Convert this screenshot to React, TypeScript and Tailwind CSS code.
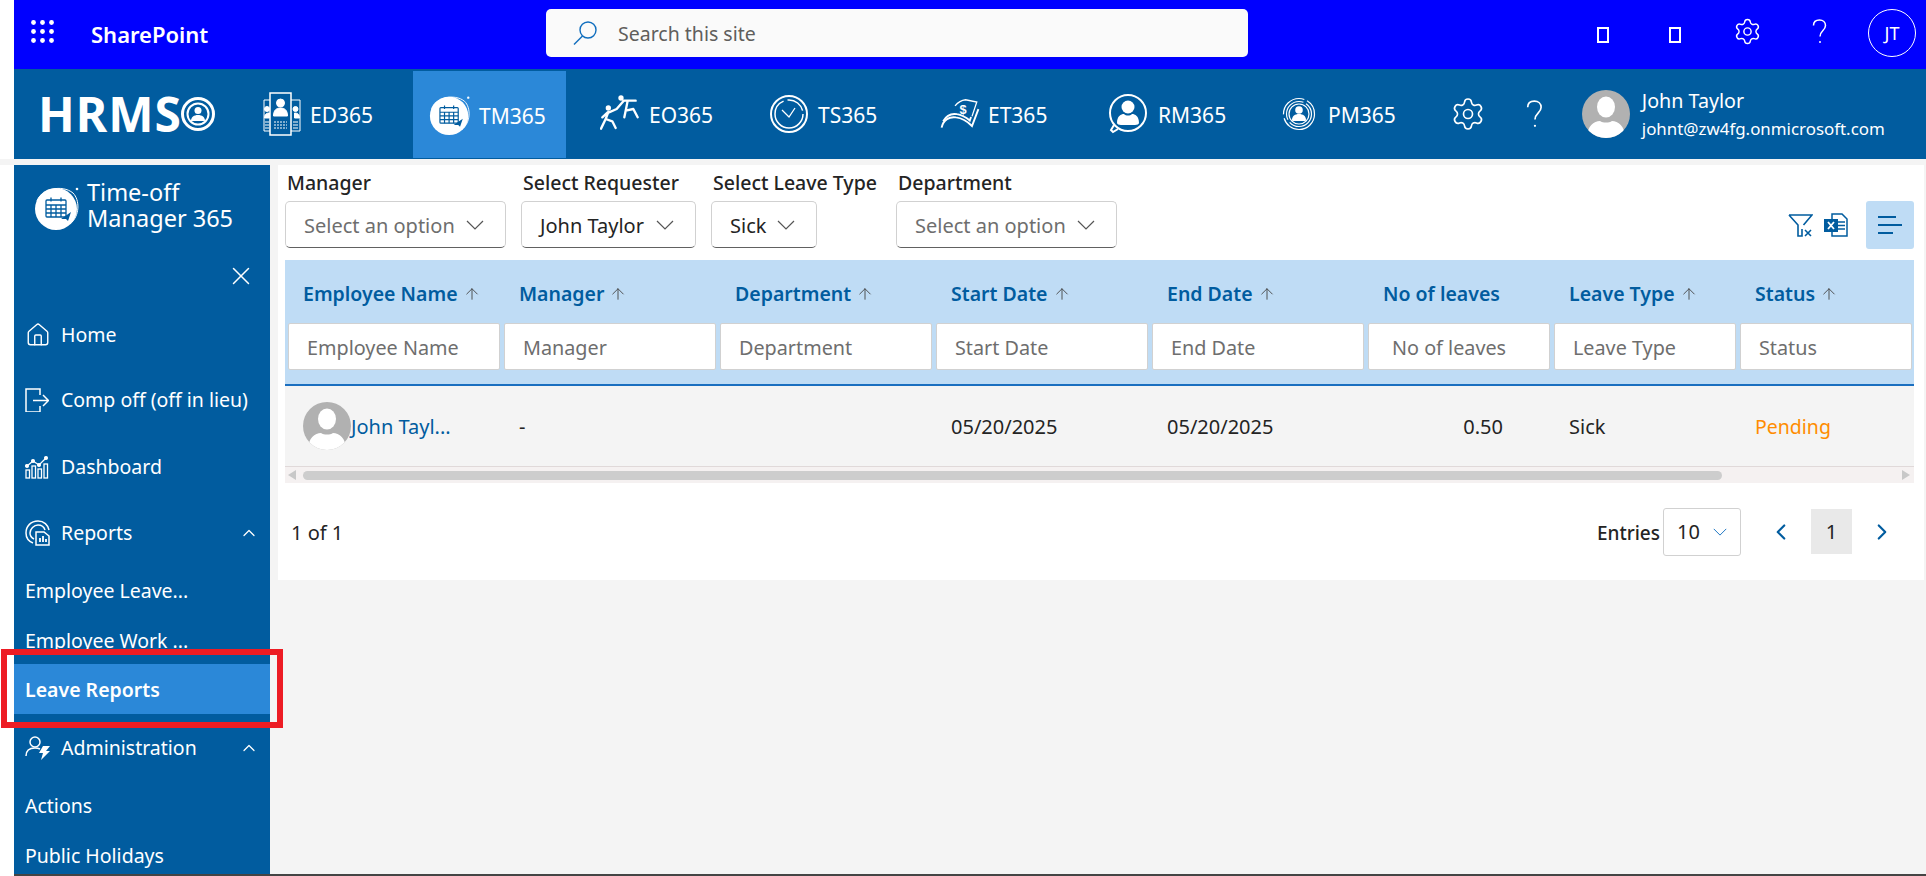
import { ArrowUp, ChevronLeft, ChevronRight, ChevronUp, House, Settings, X } from "lucide-react";
import type { ReactNode } from "react";

const BLUE = "#015c9f";

function Waffle() {
  return (
    <svg width="23" height="23" viewBox="0 0 23 23" fill="white">
      {[2.5, 11.5, 20.5].flatMap((y) => [2.5, 11.5, 20.5].map((x) => <circle key={`${x}-${y}`} cx={x} cy={y} r="2.4" />))}
    </svg>
  );
}

function Question({ size, className }: { size: number; className?: string }) {
  return (
    <svg width={size * 0.6} height={size} viewBox="0 0 15 25" fill="none" stroke="white" strokeWidth="1.5" className={className}>
      <path d="M1.5 6.5C1.5 3 4 1 7.500 1s6 2.300 6 5.500c0 5-5.500 5-5.500 11" />
      <circle cx="8" cy="23" r="1" fill="white" stroke="none" />
    </svg>
  );
}

function Chev({ w, h, className }: { w: number; h: number; className?: string }) {
  return (
    <svg width={w} height={h} viewBox="0 0 18 10" fill="none" stroke="currentColor" strokeWidth="1.200" className={className}>
      <path d="M1 1l8 8 8-8" />
    </svg>
  );
}

function UserAvatar({ size }: { size: number }) {
  return (
    <svg width={size} height={size} viewBox="0 0 48 48" className="shrink-0">
      <defs>
        <clipPath id={`av-${size}`}>
          <circle cx="24" cy="24" r="24" />
        </clipPath>
      </defs>
      <circle cx="24" cy="24" r="24" fill="#b1b1b1" />
      <g clipPath={`url(#av-${size})`}>
        <ellipse cx="24" cy="17" rx="9" ry="10.500" fill="white" />
        <path d="M5 48c0-12 7-17 13-17 3 2 9 2 12 0 6 0 13 5 13 17z" fill="white" />
      </g>
    </svg>
  );
}

function TmLogo({ w }: { w: number }) {
  return (
    <svg width={w} height={w} viewBox="0 0 46 46" fill="none" className="shrink-0">
      <circle cx="22" cy="24" r="21" fill="white" />
      <path d="M3 16C7 4 28-1 39 8c7 7 7 23-3 31" stroke="white" strokeWidth="1" />
      <circle cx="43" cy="4" r="1.300" fill="white" />
      <g stroke={BLUE} strokeWidth="1.300">
        <rect x="12" y="15" width="20" height="17" rx="1" />
        <path d="M12 20h20M12 24h20M12 28h20M17 20v12M22 20v12M27 20v12M17 12.500v4M27 12.500v4" />
      </g>
      <path d="M27 34l10-7-3 9-2-2z" fill={BLUE} />
    </svg>
  );
}

function EdIcon() {
  return (
    <svg width="38" height="44" viewBox="0 0 38 44" fill="none" stroke="white" strokeWidth="1">
      <path d="M7 8H1v31h6M28 8h9v31h-9" />
      <rect x="7" y="1" width="21" height="42" strokeWidth="1.500" />
      <circle cx="17.500" cy="11" r="4" fill="white" />
      <path d="M10.500 24c0-6 3-8 7-8s7 2 7 8z" fill="white" />
      <path d="M11 30h13M11 33h13M11 36h13" strokeDasharray="2 1" />
      <circle cx="4" cy="17" r="2.500" fill="white" />
      <circle cx="32.500" cy="17" r="2.500" fill="white" />
      <path d="M1.500 26c0-4 2-5 5-5v5zM36.500 26c0-4-2-5-5-5v5z" fill="white" />
      <path d="M2 30h4M2 33h4M2 36h4M30 30h5M30 33h5M30 36h5" />
    </svg>
  );
}

function EoIcon() {
  return (
    <svg width="40" height="40" viewBox="35 30 120 120" fill="none" stroke="white" strokeWidth="7" strokeLinejoin="round" strokeLinecap="round" className="shrink-0">
      <circle cx="60" cy="72" r="8" fill="white" stroke="none" />
      <circle cx="98" cy="42" r="8" fill="white" stroke="none" />
      <path d="M58 85L42 100M60 84l-8 21L38 134M52 105l20 7 10 20M62 85l23-10 20-23" />
      <path d="M105 50h15l22 0M118 50l-6 30-4 20M112 80l23-5 13 25" />
    </svg>
  );
}

function TsIcon() {
  return (
    <svg width="38" height="38" viewBox="0 0 38 38" fill="none" stroke="white" className="shrink-0">
      <circle cx="19" cy="19" r="18" strokeWidth="2" />
      <circle cx="19" cy="19" r="14" strokeWidth="1.500" strokeDasharray="60 4 20 4" />
      <path d="M12 15l7 7 6-9" strokeWidth="1.300" />
    </svg>
  );
}

function EtIcon() {
  return (
    <svg width="40" height="34" viewBox="25 35 125 105" fill="none" stroke="white" className="shrink-0">
      <path d="M30 130C35 105 55 95 75 98c20 2 35 12 50 27l20-53" strokeWidth="6" />
      <path d="M35 110c10-18 25-25 43-22 14 2 27 9 40 20l4-11" strokeWidth="6" />
      <path d="M72 62C82 50 95 44 105 43l35 7-15 45" strokeWidth="4" />
      <text x="86" y="88" fill="white" stroke="none" fontSize="40" fontWeight="700" fontFamily="'Liberation Sans', sans-serif">$</text>
    </svg>
  );
}

function RmIcon() {
  return (
    <svg width="40" height="40" viewBox="0 0 40 40" fill="none" stroke="white" className="shrink-0">
      <circle cx="20" cy="19" r="18" strokeWidth="2" />
      <path d="M6 31l-3 5 2 2 5-3" strokeWidth="2" />
      <circle cx="20" cy="13" r="6.500" fill="white" stroke="none" />
      <path d="M9 29c0-7 4-9 7-9 2 2 6 2 8 0 3 0 7 2 7 9 0 1-2 2-4 2H13c-2 0-4-1-4-2z" fill="white" stroke="none" />
    </svg>
  );
}

function PmIcon() {
  return (
    <svg width="34" height="36" viewBox="0 0 34 36" fill="none" stroke="white" className="shrink-0">
      <circle cx="17" cy="18" r="15.500" strokeWidth="1.200" strokeDasharray="44 4 30 3" />
      <circle cx="17" cy="18" r="12.500" strokeWidth="1.200" strokeDasharray="30 3" />
      <circle cx="17" cy="18" r="10" strokeWidth="1.200" />
      <circle cx="17" cy="14" r="3.800" fill="white" stroke="none" />
      <path d="M10 24c0-4 3-6 7-6s7 2 7 6c0 1-1 1-2 1H12c-1 0-2 0-2-1z" fill="white" stroke="none" />
    </svg>
  );
}

function SearchGlyph() {
  return (
    <svg width="24" height="24" viewBox="0 0 24 24" fill="none" stroke="#106ebe" strokeWidth="1.400" className="shrink-0">
      <circle cx="15" cy="9" r="8" />
      <path d="M9.500 15L1 23.500" />
    </svg>
  );
}

function ExitIcon() {
  return (
    <svg width="24" height="24" viewBox="0 0 24 24" fill="none" stroke="white" strokeWidth="1.500">
      <path d="M15 7V1H1v23h14v-6" />
      <path d="M8 12.500h15M18 7l5.500 5.500L18 18" />
    </svg>
  );
}

function DashIcon() {
  return (
    <svg width="24" height="24" viewBox="0 0 24 24" fill="none" stroke="white" strokeWidth="1.300">
      <rect x="1" y="15" width="3.500" height="8" />
      <rect x="7" y="11" width="3.500" height="12" />
      <rect x="13" y="14" width="3.500" height="9" />
      <rect x="19" y="9" width="3.500" height="14" />
      <path d="M2 11l6-5 6 4 7-7" />
      <circle cx="2" cy="11" r="1.400" fill="white" />
      <circle cx="8" cy="6" r="1.400" fill="white" />
      <circle cx="14" cy="10" r="1.400" fill="white" />
      <circle cx="21" cy="3" r="1.400" fill="white" />
    </svg>
  );
}

function ReportIcon() {
  return (
    <svg width="26" height="26" viewBox="0 0 26 26" fill="none" stroke="white" strokeWidth="1.500">
      <path d="M8 23C3 21 1 17 1 13 1 6 6 1 13 1c6 0 10 4 11 9" />
      <path d="M9 19c-2-1-4-3-4-6 0-4 4-8 8-8 3 0 6 2 7 5" />
      <path d="M11 12h8l5 4v9H11z" />
      <path d="M15 22v-4M18 22v-6M21 22v-3" strokeWidth="1.800" />
    </svg>
  );
}

function AdminIcon() {
  return (
    <svg width="26" height="24" viewBox="0 0 26 24" fill="none" stroke="white" strokeWidth="1.500">
      <circle cx="10" cy="6" r="5" />
      <path d="M1 20c0-5 3-8 9-8 2 0 3 0 5 1" />
      <path d="M18 10h7l-4 5h4l-9 9 2-7h-4z" fill="white" stroke="none" />
    </svg>
  );
}

function ClearFilter() {
  return (
    <svg width="25" height="23" viewBox="0 0 25 23" fill="none" stroke={BLUE} strokeWidth="1.600">
      <path d="M1 1h23l-8.500 10M1 1l9 10v11h4v-7" />
      <path d="M17 16l6 6M23 16l-6 6" />
    </svg>
  );
}

function ExcelIcon() {
  return (
    <svg width="24" height="24" viewBox="0 0 24 24" fill="none">
      <path d="M8 1h10l5 5v17H8z" stroke={BLUE} strokeWidth="1.500" fill="white" />
      <path d="M14 9h7M14 12.500h7M14 16h7" stroke={BLUE} strokeWidth="1.300" />
      <rect x="0" y="6" width="14" height="13" fill={BLUE} />
      <path d="M4 9l6 7M10 9l-6 7" stroke="white" strokeWidth="1.800" />
    </svg>
  );
}

function NavTab({ icon, label, active, className }: { icon: ReactNode; label: string; active?: boolean; className: string }) {
  return (
    <div className={`flex shrink-0 items-center self-stretch ${className} ${active ? "bg-[#2b88d8]" : ""}`}>
      {icon}
      <span className="pt-[4px] text-[21px]">{label}</span>
    </div>
  );
}

function SideItem({ icon, label, chevron, className }: { icon: ReactNode; label: string; chevron?: boolean; className: string }) {
  return (
    <div className={`flex h-[40px] items-center pl-[11px] pr-[11px] ${className}`}>
      <span className="flex w-[36px] shrink-0">{icon}</span>
      <span className="flex-1 whitespace-nowrap text-[19.5px]">{label}</span>
      {chevron && <ChevronUp size={20} strokeWidth={1.500} />}
    </div>
  );
}

function SubItem({ label, className }: { label: string; className: string }) {
  return <div className={`flex h-[40px] items-center whitespace-nowrap pl-[11px] text-[19.5px] ${className}`}>{label}</div>;
}

function FilterSelect({ label, value, placeholder, className }: { label: string; value: string; placeholder?: boolean; className: string }) {
  return (
    <div className={`flex flex-col ${className}`}>
      <span className="whitespace-nowrap pl-[2px] text-[19.5px] font-medium leading-[36px] text-[#242424]">{label}</span>
      <div className={`flex h-[47px] items-center justify-between rounded-[5px] border border-[#d1d1d1] border-b-[#616161] pl-[18px] pr-[21px] text-[20px] ${placeholder ? "text-[#6e6e6e]" : "text-[#242424]"}`}>
        <span className="whitespace-nowrap pt-[2px]">{value}</span>
        <Chev w={18} h={10} className="text-[#555]" />
      </div>
    </div>
  );
}

const columns = [
  { name: "Employee Name", w: "w-[216px]", inputPad: "pl-[18px]", sort: true },
  { name: "Manager", w: "w-[216px]", inputPad: "pl-[18px]", sort: true },
  { name: "Department", w: "w-[216px]", inputPad: "pl-[18px]", sort: true },
  { name: "Start Date", w: "w-[216px]", inputPad: "pl-[18px]", sort: true },
  { name: "End Date", w: "w-[216px]", inputPad: "pl-[18px]", sort: true },
  { name: "No of leaves", w: "w-[186px]", inputPad: "pl-[23px]", sort: false },
  { name: "Leave Type", w: "w-[186px]", inputPad: "pl-[18px]", sort: true },
  { name: "Status", w: "w-[173px]", inputPad: "pl-[18px]", sort: true },
];

export default function App() {
  return (
    <div className="relative flex h-[876px] w-[1926px] flex-col overflow-hidden bg-white font-['Noto_Sans',sans-serif] text-white">
      <div className="ml-[14px] flex h-[69px] shrink-0 items-center bg-[#0000ff]">
        <div className="ml-[17px] mt-[-7px] flex"><Waffle /></div>
        <span className="ml-[37px] w-[118px] whitespace-nowrap text-[22px] font-semibold">SharePoint</span>
        <div className="mb-[3px] ml-[337px] flex h-[48px] w-[702px] items-center rounded-[5px] bg-[#fafafa] pl-[27px] text-[#605e5c]">
          <SearchGlyph />
          <span className="ml-[21px] pt-[2px] text-[19.5px]">Search this site</span>
        </div>
        <div className="ml-[349px] h-[16px] w-[12px] border-2 border-white" />
        <div className="ml-[60px] h-[16px] w-[12px] border-2 border-white" />
        <Settings size={29} strokeWidth={1.200} className="ml-[52px] mt-[-7px]" />
        <Question size={25} className="ml-[50px] mt-[-7px]" />
        <div className="mb-[3px] ml-[41px] flex h-[48px] w-[48px] items-center justify-center rounded-full border border-white text-[18px]">JT</div>
      </div>

      <div className="ml-[14px] flex h-[90px] shrink-0 items-center bg-[#015c9f]">
        <div className="ml-[24px] flex w-[225px] shrink-0 items-center">
          <span className="text-[48px] font-bold leading-none tracking-[1px]">HRMS</span>
          <svg width="34" height="34" viewBox="0 0 34 34" fill="none" stroke="white" className="ml-[-1px]">
            <circle cx="17" cy="17" r="15.500" strokeWidth="3" />
            <circle cx="17" cy="17" r="10.500" strokeWidth="2" />
            <circle cx="17" cy="13.500" r="3.500" fill="white" stroke="none" />
            <path d="M10 24c0-4 3-6 7-6s7 2 7 6z" fill="white" stroke="none" />
          </svg>
        </div>
        <NavTab icon={<EdIcon />} label="ED365" className="w-[150px] gap-[9px]" />
        <NavTab icon={<TmLogo w={42} />} label="TM365" active className="mb-[1px] mt-[2px] w-[153px] gap-[8px] pl-[16px]" />
        <NavTab icon={<EoIcon />} label="EO365" className="ml-[34px] w-[170px] gap-[9px]" />
        <NavTab icon={<TsIcon />} label="TS365" className="w-[170px] gap-[10px]" />
        <NavTab icon={<EtIcon />} label="ET365" className="w-[168px] gap-[8px]" />
        <NavTab icon={<RmIcon />} label="RM365" className="w-[174px] gap-[10px]" />
        <NavTab icon={<PmIcon />} label="PM365" className="w-[168px] gap-[12px]" />
        <Settings size={36} strokeWidth={1.100} className="shrink-0" />
        <Question size={28} className="ml-[40px] shrink-0" />
        <div className="ml-[39px]"><UserAvatar size={48} /></div>
        <div className="ml-[12px] flex flex-col whitespace-nowrap pt-[4px]">
          <span className="text-[19.7px] leading-[26px]">John Taylor</span>
          <span className="text-[16.9px] leading-[30px]">johnt@zw4fg.onmicrosoft.com</span>
        </div>
      </div>

      <div className="flex min-h-0 flex-1 bg-[#f4f4f4] pt-[6px]">
        <div className="w-[14px] shrink-0 bg-white" />
        <aside className="w-[256px] shrink-0 overflow-hidden bg-[#015c9f]">
          <div className="flex items-start pl-[20px] pt-[14px]">
            <div className="mt-[6px] flex"><TmLogo w={46} /></div>
            <span className="ml-[7px] whitespace-nowrap text-[23.5px] leading-[26px]">Time-off<br />Manager 365</span>
          </div>
          <div className="mt-[30px] flex justify-end pr-[14px]"><X size={30} strokeWidth={1.200} /></div>
          <SideItem icon={<House size={26} strokeWidth={1.300} />} label="Home" className="mt-[24px]" />
          <SideItem icon={<ExitIcon />} label="Comp off (off in lieu)" className="mt-[25px]" />
          <SideItem icon={<DashIcon />} label="Dashboard" className="mt-[27px]" />
          <SideItem icon={<ReportIcon />} label="Reports" chevron className="mt-[26px]" />
          <SubItem label="Employee Leave..." className="mt-[18px]" />
          <SubItem label="Employee Work ..." className="mt-[10px]" />
          <div className="mt-[3px] flex h-[50px] items-center bg-[#2b88d8] pl-[11px] pt-[2px] text-[19.5px] font-semibold">Leave Reports</div>
          <SideItem icon={<AdminIcon />} label="Administration" chevron className="mt-[14px]" />
          <SubItem label="Actions" className="mt-[18px]" />
          <SubItem label="Public Holidays" className="mt-[10px]" />
        </aside>

        <main className="ml-[8px] h-[415px] w-[1646px] bg-white pl-[7px] text-[#242424]">
          <div className="flex h-[95px] w-[1629px] items-start">
            <div className="flex gap-[15px]">
              <FilterSelect label="Manager" value="Select an option" placeholder className="w-[221px]" />
              <FilterSelect label="Select Requester" value="John Taylor" className="w-[175px]" />
              <FilterSelect label="Select Leave Type" value="Sick" className="w-[106px]" />
              <div className="ml-[64px]"><FilterSelect label="Department" value="Select an option" placeholder className="w-[221px]" /></div>
            </div>
            <div className="ml-auto mt-[36px] flex items-center">
              <ClearFilter />
              <div className="ml-[11px] flex"><ExcelIcon /></div>
              <div className="ml-[18px] flex h-[48px] w-[48px] flex-col items-start justify-center gap-[6px] rounded-[3px] bg-[#bfdcf5] pl-[12px]">
                <span className="h-[2px] w-[18px] bg-[#015c9f]" />
                <span className="h-[2px] w-[24px] bg-[#015c9f]" />
                <span className="h-[2px] w-[15px] bg-[#015c9f]" />
              </div>
            </div>
          </div>
          <div className="w-[1629px]">
            <div className="h-[126px] border-b-2 border-[#1a6fc0] bg-[#bfdcf5] pl-[2px]">
              <div className="flex h-[63px]">
                {columns.map((c) => (
                  <div key={c.name} className={`flex ${c.w} shrink-0 items-center pl-[16px] pt-[4px] text-[19.5px] font-semibold text-[#015c9f]`}>
                    <span className="whitespace-nowrap">{c.name}</span>
                    {c.sort && <ArrowUp size={18} strokeWidth={1.200} className="ml-[5px] text-[#444]" />}
                  </div>
                ))}
              </div>
              <div className="flex">
                {columns.map((c) => (
                  <div key={c.name} className={`${c.w} shrink-0 pl-[1px] pr-[3px] last:pr-0`}>
                    <div className={`flex h-[47px] items-center whitespace-nowrap rounded-[2px] border border-[#d1d1d1] bg-white pt-[3px] text-[19.8px] text-[#6e6e6e] ${c.inputPad}`}>{c.name}</div>
                  </div>
                ))}
              </div>
            </div>
            <div className="flex h-[81px] items-center border-b border-[#e0d9d9] bg-[#f4f4f4] pl-[2px] text-[20px]">
              <div className="flex w-[216px] items-center pl-[16px] text-[#015c9f]"><UserAvatar size={48} /><span className="whitespace-nowrap pt-[2px]">John Tayl...</span></div>
              <div className="w-[216px] pl-[16px] pt-[2px]">-</div>
              <div className="w-[216px]" />
              <div className="w-[216px] pl-[16px] pt-[2px]">05/20/2025</div>
              <div className="w-[216px] pl-[16px] pt-[2px]">05/20/2025</div>
              <div className="w-[186px] pr-[50px] pt-[2px] text-right">0.50</div>
              <div className="w-[186px] pl-[16px] pt-[2px]">Sick</div>
              <div className="pl-[16px] pt-[2px] text-[19.5px] text-[#ff8c00]">Pending</div>
            </div>
            <div className="flex h-[16px] items-center bg-[#f5f1f1]">
              <span className="ml-[3px] h-0 w-0 border-y-[5px] border-r-[8px] border-y-transparent border-r-[#c8c8c8]" />
              <div className="ml-[7px] h-[9px] w-[1419px] rounded-full bg-[#cdcdcd]" />
              <span className="ml-[180px] h-0 w-0 border-y-[5px] border-l-[8px] border-y-transparent border-l-[#c8c8c8]" />
            </div>
            <div className="flex h-[97px] items-center text-[20px]">
              <span className="ml-[6px] pt-[3px]">1 of 1</span>
              <span className="ml-auto pt-[3px] text-[19px] font-medium">Entries</span>
              <div className="ml-[3px] flex h-[48px] w-[78px] items-center justify-between rounded-[3px] border border-[#d1d1d1] pl-[13px] pr-[13px]">
                10<Chev w={14} h={8} className="text-[#106ebe]" />
              </div>
              <ChevronLeft size={26} strokeWidth={2} className="ml-[27px] text-[#015c9f]" />
              <div className="ml-[17px] flex h-[45px] w-[41px] items-center justify-center bg-[#e9e9e9]">1</div>
              <ChevronRight size={26} strokeWidth={2} className="ml-[17px] mr-[19px] text-[#015c9f]" />
            </div>
          </div>
        </main>
      </div>

      <div className="ml-[14px] h-[2px] shrink-0 bg-[#444]" />
      <div className="absolute left-[1px] top-[649px] h-[79px] w-[282px] border-[6px] border-[#ed1c24]" />
    </div>
  );
}
